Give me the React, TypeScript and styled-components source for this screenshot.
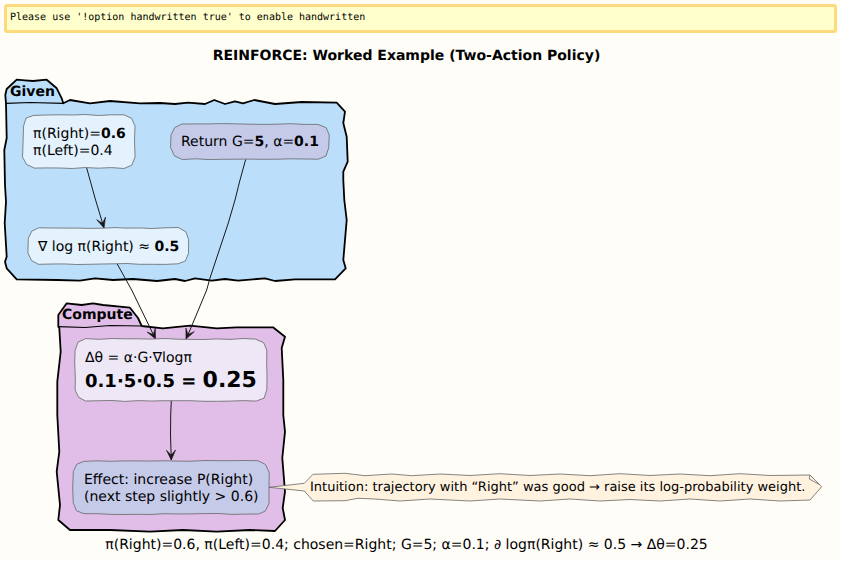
import React, { FC, ReactNode } from 'react';
import styled, { createGlobalStyle } from 'styled-components';

// the diagram canvas starts this far below the top of the page
const CANVAS_TOP = 70;

type Pt = [number, number];

const GlobalStyle = createGlobalStyle`
    html, body {
        margin: 0;
        padding: 0;
        background-color: #fffdf8;
    }
`;

const Page = styled.div`
    width: 841px;
    height: 561px;
    overflow: hidden;
    display: flex;
    flex-direction: column;
    font-family: 'DejaVu Sans', sans-serif;
    text-rendering: geometricPrecision;
    color: #000;
    background-color: #fffdf8;
`;

const Banner = styled.div`
    box-sizing: border-box;
    margin: 4px 4px 0;
    height: 29px;
    padding: 5px 0 0 3px;
    background-color: #ffffcc;
    border: 3px solid #ffd97d;
    border-radius: 3px;
    font-family: 'DejaVu Sans Mono', monospace;
    font-size: 10px;
    line-height: 12px;
    white-space: pre;
`;

const Title = styled.h1`
    margin: 0;
    height: 37px;
    width: 813px;
    text-align: center;
    font-size: 14px;
    font-weight: 700;
    line-height: 46px;
    white-space: nowrap;
`;

const Canvas = styled.div`
    position: relative;
    height: 464px;
    flex: none;
`;

const Drawing = styled.svg`
    position: absolute;
    left: 0;
    top: 0;
`;

const NodeBox = styled.div<{ $x: number; $y: number; $w: number; $h: number }>`
    position: absolute;
    left: ${({ $x }) => $x}px;
    top: ${({ $y }) => $y - CANVAS_TOP}px;
    width: ${({ $w }) => $w}px;
    height: ${({ $h }) => $h}px;
    display: flex;
    flex-direction: column;
    justify-content: center;
    font-size: 14px;
    line-height: 16.3px;
    white-space: nowrap;
`;

const NodeShape = styled.svg`
    position: absolute;
    left: 0;
    top: 0;
    overflow: visible;
`;

const NodeText = styled.div<{ $pad: number; $top: number }>`
    position: relative;
    padding-left: ${({ $pad }) => $pad}px;
    padding-top: ${({ $top }) => $top}px;
`;

const BigLine = styled.div`
    font-size: 18px;
    font-weight: 700;
    line-height: 29px;
    margin-top: -1px;
`;

const Huge = styled.span`
    font-size: 22px;
`;

const FolderLabel = styled.div<{ $x: number; $y: number }>`
    position: absolute;
    left: ${({ $x }) => $x}px;
    top: ${({ $y }) => $y - CANVAS_TOP}px;
    font-size: 14px;
    font-weight: 700;
    line-height: 16px;
`;

const NoteText = styled.div`
    position: absolute;
    left: 310px;
    top: ${480 - CANVAS_TOP}px;
    font-size: 13px;
    line-height: 16px;
    white-space: nowrap;
`;

const Footer = styled.div`
    width: 813px;
    text-align: center;
    font-size: 14px;
    line-height: 16px;
    margin-top: 3px;
    white-space: nowrap;
`;

const toPath = (pts: Pt[], close = false) =>
  `M${pts.map(([x, y]) => `${x.toFixed(1)} ${y.toFixed(1)}`).join('L')}${close ? 'Z' : ''}`;

// small repeatable noise so the hand drawn borders stay the same every run
const noise = (i: number, seed: number) => {
  const v = Math.sin(i * 12.9898 + seed * 78.233) * 43758.5453;
  return (v - Math.floor(v) - 0.5) * 1.1;
};

const wobblyRect = (w: number, h: number, r: number, seed: number) => {
  const pts: Pt[] = [];
  const step = 13;
  const edge = (x0: number, y0: number, x1: number, y1: number) => {
    const len = Math.hypot(x1 - x0, y1 - y0);
    const n = Math.max(1, Math.round(len / step));
    for (let i = 0; i < n; i += 1) {
      const t = i / n;
      const k = pts.length;
      pts.push([x0 + (x1 - x0) * t + noise(k, seed), y0 + (y1 - y0) * t + noise(k + 50, seed)]);
    }
  };
  const c = r * 0.3;
  edge(r, 0, w - r, 0);
  edge(w - r, 0, w - c, c);
  edge(w - c, c, w, r);
  edge(w, r, w, h - r);
  edge(w, h - r, w - c, h - c);
  edge(w - c, h - c, w - r, h);
  edge(w - r, h, r, h);
  edge(r, h, c, h - c);
  edge(c, h - c, 0, h - r);
  edge(0, h - r, 0, r);
  edge(0, r, c, c);
  edge(c, c, r, 0);
  return toPath(pts, true);
};

type NodeProps = {
  x: number;
  y: number;
  w: number;
  h: number;
  fill: string;
  pad: number;
  seed: number;
  top?: number;
  children: ReactNode;
};

const Node: FC<NodeProps> = ({ x, y, w, h, fill, pad, seed, top = 2, children }) => (
  <NodeBox $x={x} $y={y} $w={w} $h={h}>
    <NodeShape width={w} height={h}>
      <path d={wobblyRect(w, h, 11, seed)} fill={fill} stroke="#666" strokeWidth="0.8" />
    </NodeShape>
    <NodeText $pad={pad} $top={top}>{children}</NodeText>
  </NodeBox>
);

const givenFolder: Pt[] = [
  [6, 103.3], [5.3, 95], [6.7, 89], [16.7, 79.7], [25, 80.3], [33, 81], [46.7, 79.7], [56.7, 88.3],
  [61.7, 98.3], [63.3, 103.3], [70, 100], [90, 103.3], [110, 101], [140, 103.3], [160, 103], [175, 104],
  [188, 102.7], [205, 104], [214.3, 100], [225, 104], [235, 101.3], [243, 103.3], [254.3, 100], [275, 104],
  [301.7, 102], [336.7, 102.7], [345, 111.7], [343.3, 123], [346.7, 136.7], [347.7, 161.7], [343.3, 171.7],
  [343.3, 180], [344.3, 200], [346.7, 220], [343.3, 260], [345.7, 268.3], [335, 279.3], [315, 279.3],
  [295, 279.3], [275, 281], [265, 278.3], [238, 280.7], [225, 279], [211.7, 280.7], [195, 278.3], [185, 281],
  [175, 279], [157, 281], [133, 279], [113, 280], [95, 278.3], [80, 280.7], [57, 280], [16.7, 279.3],
  [6.7, 268.3], [5, 261.7], [6.7, 256.7], [4.7, 223], [6, 201.7], [5, 185], [4.3, 150], [6.7, 138],
];

const computeFolder: Pt[] = [
  [58.3, 326.7], [58.3, 315], [66.7, 303.3], [81.7, 305], [93, 303.3], [103, 305], [130, 307.7], [138, 318],
  [141.7, 326], [163, 328.3], [190, 325.7], [216.7, 328.3], [236.7, 327.3], [273, 327.3], [285, 336.7],
  [281.7, 348], [283.3, 380], [283.3, 415], [285, 431.7], [282.3, 458], [285, 491.7], [282.7, 508], [285, 520],
  [275, 531], [250, 530], [216.7, 531.7], [183, 530], [150, 531.7], [110, 530], [70, 530], [58.3, 520],
  [60, 505], [56.7, 471.7], [59.3, 451.7], [57.3, 415], [57.3, 381.7], [60.7, 351.7], [59.3, 328],
];

const noteShape: Pt[] = [
  [269, 487.3], [304.3, 483.3], [313, 474.3], [345, 473.3], [365, 475.7], [391.7, 474], [411.7, 475.7],
  [440, 474], [470, 475.5], [500, 473.7], [530, 475.5], [560, 474], [590, 475.7], [620, 473.7], [650, 475.5],
  [680, 474], [710, 475.7], [740, 473.7], [770, 475.5], [810, 475], [821.7, 486.7], [810, 500], [780, 501],
  [750, 499], [720, 501], [690, 499], [660, 501], [630, 499.5], [600, 501], [570, 499], [540, 501], [500, 499],
  [470, 501], [430, 499], [400, 501], [375, 499], [358, 498.3], [345, 500.7], [313.3, 501], [304.3, 491],
];

const arrows: Pt[][] = [
  [[86.7, 168], [95, 198], [104, 228]],
  [[245.7, 159.3], [240, 180], [238.3, 186.7], [235, 200], [228.3, 223], [218.3, 253], [210, 278], [206.7, 290], [190, 330], [186, 339]],
  [[116.7, 263], [131.7, 290], [155.5, 339]],
  [[171.3, 401], [170.7, 415], [170.5, 435], [171.3, 460]],
];

const headPath = (pts: Pt[]) => {
  const [tx, ty] = pts[pts.length - 1];
  const [px, py] = pts[pts.length - 2];
  const a = Math.atan2(ty - py, tx - px);
  const at = (back: number, side: number): Pt => [
    tx - back * Math.cos(a) - side * Math.sin(a),
    ty - back * Math.sin(a) + side * Math.cos(a),
  ];
  return toPath([[tx, ty], at(10, 4.6), at(5, 0), at(10, -4.6)], true);
};

const App: FC = () => (
  <Page>
    <GlobalStyle />
    <Banner>Please use &apos;!option handwritten true&apos; to enable handwritten</Banner>
    <Title>REINFORCE: Worked Example (Two-Action Policy)</Title>
    <Canvas>
      <Drawing width="841" height="464" viewBox={`0 ${CANVAS_TOP} 841 464`}>
        <path d={toPath(givenFolder, true)} fill="#bbdefb" stroke="#000" strokeWidth="1.8" strokeLinejoin="round" />
        <path d="M6 103.3L30 102.5L63.3 103.3" fill="none" stroke="#000" strokeWidth="1.2" />
        <path d={toPath(computeFolder, true)} fill="#e1bee7" stroke="#000" strokeWidth="1.8" strokeLinejoin="round" />
        <path d="M58.3 326.7L85 327.5L110 325.5L141.7 326" fill="none" stroke="#000" strokeWidth="1.2" />
        <path d={toPath(noteShape, true)} fill="#fff3e0" stroke="#666" strokeWidth="0.8" />
        <path d="M810 475L809.3 479L819 484.3" fill="none" stroke="#666" strokeWidth="0.8" />
        {arrows.map((pts) => (
          <g key={pts[0].join()}>
            <path d={toPath(pts)} fill="none" stroke="#181818" strokeWidth="1" />
            <path d={headPath(pts)} fill="#181818" stroke="#181818" strokeWidth="0.6" />
          </g>
        ))}
      </Drawing>
      <FolderLabel $x={10} $y={84}>Given</FolderLabel>
      <FolderLabel $x={62} $y={307}>Compute</FolderLabel>
      <Node x={23} y={115} w={112} h={53} fill="#e3f2fd" pad={10} seed={1}>
        <div>π(Right)=<b>0.6</b></div>
        <div>π(Left)=0.4</div>
      </Node>
      <Node x={171} y={124} w={158} h={35} fill="#c5cae9" pad={10} seed={2}>
        <div>Return G=<b>5</b>, α=<b>0.1</b></div>
      </Node>
      <Node x={28} y={228} w={161} h={36} fill="#e3f2fd" pad={10} seed={3}>
        <div>∇ log π(Right) ≈ <b>0.5</b></div>
      </Node>
      <Node x={75} y={339} w={192} h={62} fill="#ede7f6" pad={10} seed={4} top={6}>
        <div>Δθ = α·G·∇logπ</div>
        <BigLine>0.1·5·0.5 = <Huge>0.25</Huge></BigLine>
      </Node>
      <Node x={73} y={461} w={196} h={53} fill="#c5cae9" pad={11} seed={5}>
        <div>Effect: increase P(Right)</div>
        <div>(next step slightly &gt; 0.6)</div>
      </Node>
      <NoteText>Intuition: trajectory with “Right” was good → raise its log-probability weight.</NoteText>
    </Canvas>
    <Footer>π(Right)=0.6, π(Left)=0.4; chosen=Right; G=5; α=0.1; ∂ logπ(Right) ≈ 0.5 → Δθ=0.25</Footer>
  </Page>
);

export default App;
